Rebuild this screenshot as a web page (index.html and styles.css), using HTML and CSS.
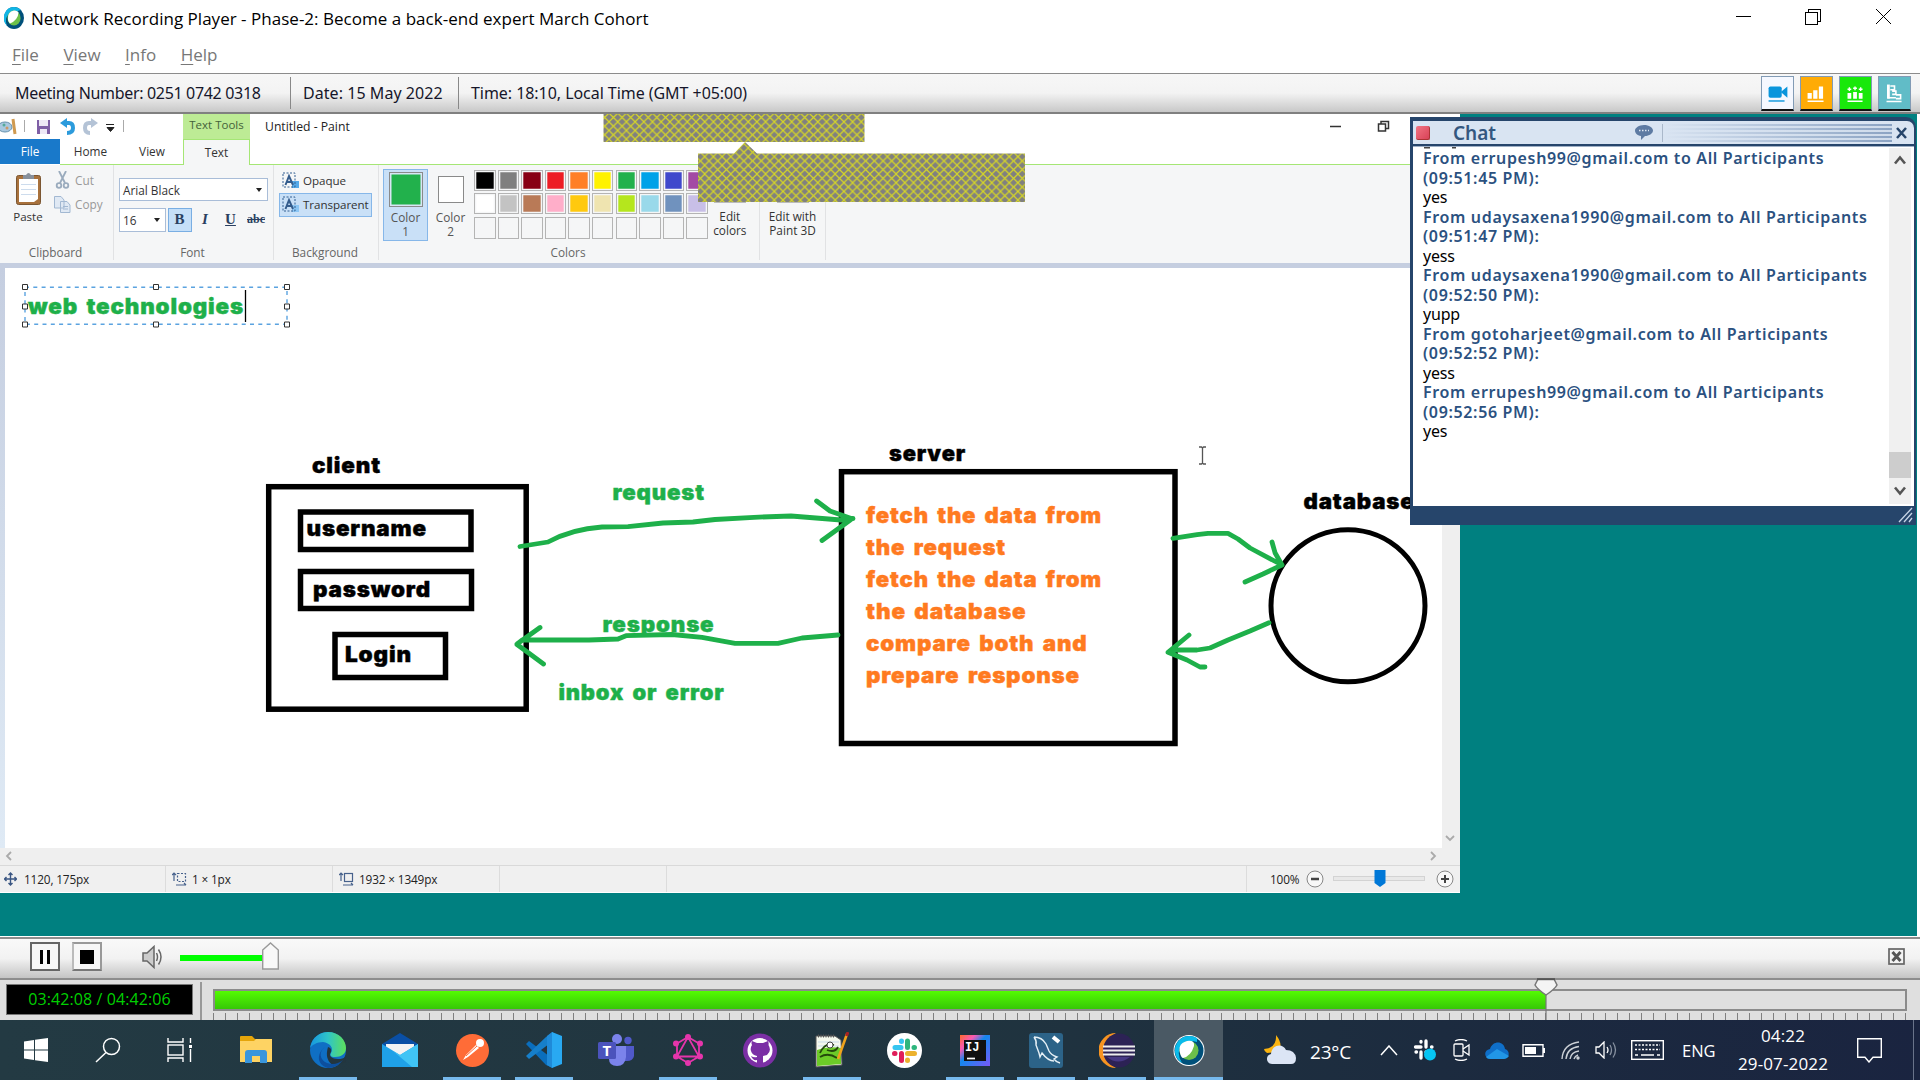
FILE: index.html
```html
<!DOCTYPE html>
<html lang="en">
<head>
<meta charset="utf-8">
<title>Network Recording Player</title>
<link rel="stylesheet" href="styles.css">
</head>
<body>
<header class="titlebar">
  <svg class="app-icon" width="20" height="22" viewBox="0 0 20 22"><ellipse cx="10" cy="11" rx="10" ry="11" fill="#00507a"/><path d="M10 0A10 11 0 0 0 3 19Q-1 8 10 5Q17 3 17 3A10 11 0 0 0 10 0Z" fill="#11b5e5"/><ellipse cx="10" cy="11" rx="6.6" ry="7.4" fill="#6cc04a"/><path d="M4 13Q3 5 10 3.6Q14 4 14.500 5.500Q14 13 6 16.500Q4.500 15 4 13Z" fill="#fff"/></svg>
  <span class="title">Network Recording Player - Phase-2: Become a back-end expert March Cohort</span>
  <svg class="win-controls" width="156" height="18" viewBox="0 0 156 18" fill="none" stroke="#000" shape-rendering="crispEdges"><path d="M0 8.500H15M69.500 4.500H81.500V16.500H69.500ZM72.500 4V1.500H84.500V13.500H82"/><path d="M140 1L155 16M155 1L140 16" shape-rendering="auto"/></svg>
</header>
<nav class="menu"><span><u>F</u>ile</span><span><u>V</u>iew</span><span><u>I</u>nfo</span><span><u>H</u>elp</span></nav>
<section class="infobar">
  <div class="info i1">Meeting Number: 0251 0742 0318</div>
  <div class="info i2">Date: 15 May 2022</div>
  <div class="info i3">Time: 18:10, Local Time (GMT +05:00)</div>
  <div class="info-buttons">
    <svg class="ib video" viewBox="0 0 33 32"><rect x="7" y="9" width="14" height="12" rx="2" fill="#0a95dc"/><path d="M20 15L27 9V21Z" fill="#0a95dc"/><path d="M7 24.500H24" stroke="#0a95dc" stroke-width="1.500"/></svg>
    <svg class="ib poll" viewBox="0 0 33 32" fill="#fff"><path d="M7 16h4.500v6H7zM13 13h4.500v9H13zM19 9h4.500v13H19zM7 24h17v1.500H7z"/></svg>
    <svg class="ib people" viewBox="0 0 33 32" fill="#fff"><path d="M8 16h4v6H8zM14 15h4v7h-4zM20 16h4v6h-4zM8 24h16v1.500H8z"/><path d="M10 10v4M8 12h4M16 9v4M14 11h4M22 10v4M20 12h4" stroke="#fff" stroke-width="1.500"/></svg>
    <svg class="ib notes" viewBox="0 0 33 32" fill="none" stroke="#fff" stroke-width="2"><path d="M10 7V22" stroke-width="3"/><path d="M12 8.500h4.500v4H12M14 14h4v3.500h-4M18 18h5v4h-5M9 21h9M8 25H24" stroke-width="1.700"/></svg>
  </div>
</section>

<main class="stage">
  <div class="paint">
    <div class="paint-title">
      <svg class="quick" width="100" height="25" viewBox="0 0 100 25"><ellipse cx="5" cy="13" rx="7" ry="5" fill="#a9c8df" stroke="#6591ad"/><circle cx="4" cy="11" r="1.500" fill="#5a9"/><circle cx="7" cy="14" r="1.500" fill="#c96"/><path d="M13 5L15 20" stroke="#cf9a50" stroke-width="3"/><path d="M24.500 6V18" stroke="#aaa"/><path d="M37 6H50V20H37Z" fill="#7f5fa6"/><path d="M39 6H48V12H39ZM40 15H47V20H40Z" fill="#eee8f6"/><path d="M63 9H69Q73 9 73 14T67 19" fill="none" stroke="#2c9bdc" stroke-width="4"/><path d="M60 9L67 4V14Z" fill="#2c9bdc"/><path d="M95 9H89Q85 9 85 14T90 19" fill="none" stroke="#b4c3d6" stroke-width="4"/><path d="M98 9L91 4V14Z" fill="#b4c3d6"/></svg>
      <svg width="25" height="25" viewBox="0 0 25 25"><path d="M6 10.500h8M7 13.500h7l-3.500 4z" stroke="#222" fill="#222"/><path d="M23.500 6V18" stroke="#aaa"/></svg>
      <div class="text-tools">Text Tools</div>
      <div class="doc-title">Untitled - Paint</div>
      <svg class="paint-controls" width="60" height="14" viewBox="0 0 60 14" fill="none" stroke="#333" stroke-width="1.500"><path d="M0 6.500H11M48.500 4H55.500V11H48.500ZM51 3.500V1.500H58.500V8.500H56"/></svg>
    </div>
    <div class="tabs"><div class="tab file">File</div><div class="tab home">Home</div><div class="tab view">View</div><div class="tab text">Text</div><div class="tab-rest"></div></div>
    <div class="ribbon">
      <div class="group clipboard">
        <div class="content">
          <div class="paste"><svg width="27" height="34" viewBox="0 0 27 34"><rect x="1.500" y="3.500" width="24" height="29" rx="2" fill="#a8713c" stroke="#7b5632"/><path d="M4 7H23V27L19 30H4Z" fill="#fff"/><path d="M6 12.500H21M6 17.500H21M6 22.500H21" stroke="#cddced"/><path d="M8 3H11Q13.500-1 16 3H19V7H8Z" fill="#87909c"/></svg><span>Paste</span></div>
          <div class="cutcopy">
            <div><svg width="17" height="18" viewBox="0 0 17 18" fill="none" stroke="#9aabbd" stroke-width="1.800"><path d="M5 0L11 12M12 0L6 12"/><circle cx="5" cy="14.500" r="2.300"/><circle cx="12" cy="14.500" r="2.300"/></svg>Cut</div>
            <div><svg width="17" height="17" viewBox="0 0 17 17" fill="#e0e9f4" stroke="#a2b8d2"><path d="M.5.500H7L10 4V12H.5ZM6.500 5.500H13L16 9V16.500H6.500Z"/><path d="M9 10.500H14M9 13H14"/></svg>Copy</div>
          </div>
        </div><div class="label">Clipboard</div>
      </div>
      <div class="group font">
        <div class="content">
          <div class="combo family"><span>Arial Black</span><i class="arrow"></i></div>
          <div class="font-row"><div class="combo size"><span>16</span><i class="arrow"></i></div><b class="fb on">B</b><i class="fb it">I</i><u class="fb">U</u><s class="fb abc">abc</s></div>
        </div><div class="label">Font</div>
      </div>
      <div class="group background">
        <div class="content">
          <div class="bg-opt"><svg width="18" height="17" viewBox="0 0 18 17"><path d="M10 9h7v7h-7z" fill="#55a9e8"/><rect x="1" y="1" width="12" height="14" fill="none" stroke="#335f91" stroke-dasharray="2 1.500"/><path d="M3.500 13L7 4L11 13M4.500 10H10" fill="none" stroke="#345c8c" stroke-width="2"/></svg>Opaque</div>
          <div class="bg-opt selected"><svg width="18" height="17" viewBox="0 0 18 17"><path d="M10 9h7v7h-7z" fill="#8cc6f4"/><rect x="1" y="1" width="12" height="14" fill="none" stroke="#335f91" stroke-dasharray="2 1.500"/><path d="M3.500 13L7 4L11 13M4.500 10H10" fill="none" stroke="#345c8c" stroke-width="2"/></svg>Transparent</div>
        </div><div class="label">Background</div>
      </div>
      <div class="group colors">
        <div class="content">
          <div class="color-btn active"><i class="sw big"></i><span>Color<br>1</span></div>
          <div class="color-btn"><i class="sw small"></i><span>Color<br>2</span></div>
          <div class="palette">
            <i class="black"></i><i class="gray"></i><i class="maroon"></i><i class="red"></i><i class="orange"></i><i class="yellow"></i><i class="green"></i><i class="sky"></i><i class="indigo"></i><i class="purple"></i>
            <i class="white"></i><i class="silver"></i><i class="brown"></i><i class="pink"></i><i class="gold"></i><i class="cream"></i><i class="lime"></i><i class="aqua"></i><i class="steel"></i><i class="lavender"></i>
            <i></i><i></i><i></i><i></i><i></i><i></i><i></i><i></i><i></i><i></i>
          </div>
          <div class="edit-btn ec"><i></i><span>Edit<br>colors</span></div>
        </div><div class="label">Colors</div>
      </div>
      <div class="group threed"><div class="content"><div class="edit-btn"><i></i><span>Edit with<br>Paint 3D</span></div></div></div>
    </div>
    <div class="canvas-area">
      <svg class="canvas" width="1437" height="580" viewBox="5 268 1437 580">
        <g fill="none" stroke="#000" stroke-width="5.500">
          <rect x="268.700" y="486.700" width="257.500" height="222.500"/><rect x="300.500" y="512" width="170.500" height="37.500"/><rect x="300.500" y="571.500" width="171" height="37"/><rect x="335" y="634.500" width="110.500" height="43"/>
          <rect x="841.500" y="471.700" width="333.500" height="271.800"/><ellipse cx="1348" cy="605.700" rx="77" ry="76" stroke-width="5"/>
        </g>
        <g class="ink">
          <text x="312" y="473" textLength="69" lengthAdjust="spacingAndGlyphs">client</text>
          <text x="306.500" y="535.500" textLength="120.500" lengthAdjust="spacingAndGlyphs">username</text>
          <text x="313" y="597" textLength="118" lengthAdjust="spacingAndGlyphs">password</text>
          <text x="345" y="662" textLength="67" lengthAdjust="spacingAndGlyphs">Login</text>
          <text x="889" y="461" textLength="77" lengthAdjust="spacingAndGlyphs">server</text>
          <text x="1303.500" y="509" textLength="111" lengthAdjust="spacingAndGlyphs">database</text>
        </g>
        <g class="ink g">
          <text x="28" y="314" textLength="216" lengthAdjust="spacingAndGlyphs">web technologies</text>
          <text x="612.500" y="500" textLength="92.500" lengthAdjust="spacingAndGlyphs">request</text>
          <text x="602.500" y="631.500" textLength="112" lengthAdjust="spacingAndGlyphs">response</text>
          <text x="558.500" y="700" textLength="166" lengthAdjust="spacingAndGlyphs">inbox or error</text>
        </g>
        <g class="ink o">
          <text x="866" y="522.500" textLength="236" lengthAdjust="spacingAndGlyphs">fetch the data from</text>
          <text x="866" y="554.500" textLength="140" lengthAdjust="spacingAndGlyphs">the request</text>
          <text x="866" y="586.500" textLength="236" lengthAdjust="spacingAndGlyphs">fetch the data from</text>
          <text x="866" y="618.500" textLength="160.500" lengthAdjust="spacingAndGlyphs">the database</text>
          <text x="866" y="650.500" textLength="221.500" lengthAdjust="spacingAndGlyphs">compare both and</text>
          <text x="866" y="682.500" textLength="214" lengthAdjust="spacingAndGlyphs">prepare response</text>
        </g>
        <g fill="none" stroke="#1eb04a" stroke-width="4.800" stroke-linecap="round" stroke-linejoin="round">
          <path d="M520 546.500L548 542Q572 529 602 527L628 526.700L663 523L693 522L715 519.500L754 517.300L791 516L841 520L853 518.500M816.600 501L830 511L852 518.700L822 540.500"/>
          <path d="M838 635L802 638L778 643.300H735L702 637.300L672 634.500L626 635.700L618 639L589 640H522L517 644L540 627.500M517 644.500L530 654L543.500 664"/>
          <path d="M1173 538.300L1197 534.700L1208 533.300H1228L1238 539L1250 548L1282 565M1272 542L1275 552.700L1282 565L1263 574L1245 582"/>
          <path d="M1269 622.700L1250 631L1228 640L1210 648L1197 650H1173L1168 652.300L1189 635M1168 652.300L1187 660L1200 667H1205"/>
        </g>
        <rect x="25" y="287.300" width="262" height="37" fill="none" stroke="#5ba3e0" stroke-width="1.400" stroke-dasharray="4 4.300"/>
        <path d="M22.500 284.500h5v5h-5zM153.500 284.500h5v5h-5zM284.500 284.500h5v5h-5zM22.500 304h5v5h-5zM284.500 304h5v5h-5zM22.500 322h5v5h-5zM153.500 322h5v5h-5zM284.500 322h5v5h-5z" fill="#fff" stroke="#333"/>
        <path d="M245.500 290V322" stroke="#000" stroke-width="1.300"/>
        <path d="M1199 447H1201.500L1202.500 448L1203.500 447H1206M1202.500 448V463M1199 464H1201.500L1202.500 463L1203.500 464H1206" fill="none" stroke="#555" stroke-width="1.300"/>
      </svg>
      <div class="vscroll"><svg width="17" height="16" viewBox="0 0 17 16"><path d="M4 4L8 8L12 4" fill="none" stroke="#aaa" stroke-width="1.800"/></svg></div>
    </div>
    <div class="hscroll"><svg width="18" height="16" viewBox="0 0 18 16"><path d="M11 4L7 8L11 12" fill="none" stroke="#aaa" stroke-width="1.800"/></svg><svg width="18" height="16" viewBox="0 0 18 16"><path d="M7 4L11 8L7 12" fill="none" stroke="#aaa" stroke-width="1.800"/></svg></div>
    <div class="status">
      <div class="cell c1"><svg width="13" height="14" viewBox="0 0 13 14" stroke="#3a5683" fill="none" stroke-width="1.400"><path d="M6.500 1V13M.5 7H12.500M4.500 3L6.500 1L8.500 3M4.500 11L6.500 13L8.500 11M2.500 5L.5 7L2.500 9M10.500 5L12.500 7L10.500 9"/></svg>1120, 175px</div>
      <div class="cell"><svg width="15" height="14" viewBox="0 0 15 14" stroke="#46618c" fill="none" stroke-width="1.200"><path d="M2 1V9M0 3L2 1L4 3M4 13H14M12 11L14 13"/><rect x="5.500" y="1.500" width="8" height="8" stroke-dasharray="2 1.500"/></svg>1 × 1px</div>
      <div class="cell"><svg width="15" height="14" viewBox="0 0 15 14" stroke="#46618c" fill="none" stroke-width="1.200"><path d="M2 1V9M0 3L2 1L4 3M4 13H14M12 11L14 13"/><rect x="5.500" y="1.500" width="8" height="8"/></svg>1932 × 1349px</div>
      <div class="cell"></div><div class="cell wide"></div>
      <div class="zoom"><span>100%</span><svg width="152" height="24" viewBox="0 0 152 24"><circle cx="10" cy="12" r="8" fill="#f8f8f8" stroke="#888"/><path d="M6 12H14" stroke="#444" stroke-width="2.500"/><rect x="28.500" y="9.500" width="91" height="4" fill="#e8e8e8" stroke="#d3d3d3"/><path d="M69.500 3H80.500V16L75 20L69.500 16Z" fill="#0078d7"/><circle cx="140" cy="12" r="8" fill="#f8f8f8" stroke="#888"/><path d="M136 12H144M140 8V16" stroke="#444" stroke-width="2"/></svg></div>
    </div>
  </div>

  <svg class="hatch" width="424" height="90" viewBox="603 114 424 90"><defs><pattern id="x" width="8.700" height="8.700" patternUnits="userSpaceOnUse"><rect width="9" height="9" fill="#808080"/><path d="M-1-1L9.700 9.700M9.700-1L-1 9.700" stroke="#d6d626" stroke-width="1.200"/></pattern></defs><path d="M603.500 114H864.500V142H603.500ZM698 153.500H734L745 142L757 153.500H1025V202H698Z" fill="url(#x)"/></svg>

  <aside class="chat">
    <div class="chat-head"><i class="red-dot"></i><span class="chat-name">Chat</span><svg class="bubble" width="20" height="17" viewBox="0 0 20 17"><path d="M10 1C15 1 19 3.500 19 6.500S15 12 11 12L7 16V12C3 11.500 1 9 1 6.500S5 1 10 1Z" fill="#5e7ba3"/><path d="M5 6.500H15" stroke="#dfe8f4" stroke-width="1.600" stroke-dasharray="1.500 1.500"/></svg><i class="grip"></i><svg width="13" height="12" viewBox="0 0 13 12"><path d="M2 1L11 11M11 1L2 11" stroke="#26456b" stroke-width="2.500"/></svg></div>
    <div class="chat-body">
      <div class="log">
        <p class="from">From errupesh99@gmail.com to All Participants<br>(09:51:45 PM):</p><p>yes</p>
        <p class="from">From udaysaxena1990@gmail.com to All Participants<br>(09:51:47 PM):</p><p>yess</p>
        <p class="from">From udaysaxena1990@gmail.com to All Participants<br>(09:52:50 PM):</p><p>yupp</p>
        <p class="from">From gotoharjeet@gmail.com to All Participants<br>(09:52:52 PM):</p><p>yess</p>
        <p class="from">From errupesh99@gmail.com to All Participants<br>(09:52:56 PM):</p><p>yes</p>
      </div>
      <div class="chat-scroll"><svg width="22" height="28" viewBox="0 0 22 28"><path d="M6 15.500L11 9.500L16 15.500" fill="none" stroke="#555" stroke-width="2.600"/></svg><i></i><svg width="22" height="26" viewBox="0 0 22 26"><path d="M6 9.500L11 15.500L16 9.500" fill="none" stroke="#555" stroke-width="2.600"/></svg></div>
    </div>
    <div class="chat-foot"><svg width="16" height="16" viewBox="0 0 16 16"><path d="M1 15L14 1M6 15L14 6M11 15L14 11" stroke="#c6d4e6" stroke-width="1.300"/></svg></div>
  </aside>
</main>

<section class="player">
  <div class="pbtn"><i class="pause"></i></div><div class="pbtn light"><i class="stop"></i></div>
  <svg class="speaker" width="22" height="24" viewBox="0 0 22 24" fill="none" stroke="#666" stroke-width="1.500"><path d="M1 8H5L12 1.500V22.500L5 16H1Z" fill="#ccc"/><path d="M14.500 8Q16.500 12 14.500 16M16.500 4.500Q21.500 12 16.500 19.500"/></svg>
  <i class="volume"></i><svg class="thumb" width="17" height="28" viewBox="0 0 17 28"><path d="M.700 8L8.500 1L16.300 8V27H.700Z" fill="#f8f8f8" stroke="#999" stroke-width="1.400"/></svg>
  <svg class="pclose" width="17" height="17" viewBox="0 0 17 17"><rect x="1" y="1" width="15" height="15" fill="#f3f3f3" stroke="#666" stroke-width="1.700"/><path d="M4.500 4L12.500 13M12.500 4L4.500 13" stroke="#555" stroke-width="3"/></svg>
</section>
<section class="timeline">
  <div class="clock">03:42:08 / 04:42:06</div><i class="tsep"></i>
  <div class="scrub"><div class="track"><i></i></div><div class="ticks"></div>
    <svg class="marker" width="24" height="42" viewBox="0 0 24 42"><path d="M4 1H20L23 7Q21 11 12 17Q3 11 1 7Z" fill="#f4f4f4" stroke="#777" stroke-width="1.500"/><path d="M3 1.200H21" stroke="#555" stroke-width="2"/><path d="M12 17V42" stroke="#777" stroke-width="1.200"/></svg></div>
</section>

<footer class="taskbar">
  <div class="task"><svg width="24" height="24" viewBox="0 0 24 24" fill="#fff"><path d="M0 3.500L10 2V11.500H0ZM11 1.800L24 0V11.500H11ZM0 12.500H10V22L0 20.500ZM11 12.500H24V24L11 22.200Z"/></svg></div>
  <div class="task"><svg width="26" height="26" viewBox="0 0 26 26" fill="none" stroke="#fff" stroke-width="1.500"><circle cx="16.500" cy="9.500" r="8"/><path d="M11 15.500L1 25"/></svg></div>
  <div class="task tv"><svg width="25" height="24" viewBox="0 0 25 24" fill="none" stroke="#fff" stroke-width="1.400"><path d="M1 0V4H16V0M1 24V20H16V24M23.500 0V5M23.500 11V24"/><rect x="1" y="7" width="15" height="10"/><path d="M22 7h3v3h-3z" fill="#fff" stroke="none"/></svg></div>
  <div class="task"><svg width="32" height="28" viewBox="0 0 32 28"><path d="M0 1Q0 0 1 0H12L15 3H31V10H0Z" fill="#e5a50a"/><path d="M0 5H14L16 3H32V26H0Z" fill="#fed363"/><path d="M5 27V17Q5 14 8 14H24Q27 14 27 17V27H20V20H12V27Z" fill="#3a96dd"/></svg></div>
  <div class="task run"><svg width="36" height="36" viewBox="0 0 36 36"><defs><linearGradient id="e1" x1="0" x2="1"><stop stop-color="#1696e0"/><stop offset=".5" stop-color="#2fc4c8"/><stop offset="1" stop-color="#5ee05a"/></linearGradient></defs><circle cx="18" cy="18" r="18" fill="#0f6fc4"/><path d="M0 16C2 5 10 0 18 0C29 0 36 8 36 16C36 22 31 25 25 25C20 25 20 23 21 21C24 16 20 11 13 10C7 10 2 13 0 16Z" fill="url(#e1)"/><path d="M18 15Q22 16 21 20C18 24 22 27 28 27Q33 27 35 25L36 30L24 34Q14 28 18 15Z" fill="#23363f"/><path d="M15 15C8 20 10 28 17 31C23 33 28 32 33 28Q27 36 18 36C7 33 6 22 15 15Z" fill="#0d4f9e"/></svg></div>
  <div class="task"><svg width="36" height="34" viewBox="0 0 36 34"><path d="M0 11L18 0L36 11V18H0Z" fill="#0a4fa5"/><path d="M4 11H32V22H4Z" fill="#f3f3f3"/><path d="M0 11L18 22L36 11V34H0Z" fill="#1fa1e8"/><path d="M36 11V34H30L11 18L18 22Z" fill="#40c4f5"/></svg></div>
  <div class="task run"><svg width="33" height="33" viewBox="0 0 33 33"><circle cx="16.500" cy="16.500" r="16.500" fill="#ff6c37"/><circle cx="24" cy="9" r="4" fill="#fff"/><path d="M20 11L23 14L12 23L7 26L10 21Z" fill="#fff"/><path d="M21 12L10 22" stroke="#ff6c37"/></svg></div>
  <div class="task run"><svg width="36" height="36" viewBox="0 0 36 36"><path d="M0 12L3 9L27 27V36L20 33Z" fill="#0a6ebd"/><path d="M0 24L3 27L27 9V0L20 5Z" fill="#167fca"/><path d="M26 0L36 4V32L26 36Z" fill="#29a9f2"/><path d="M26 0V36L21 33V4Z" fill="#1f8ad8"/></svg></div>
  <div class="task"><svg width="36" height="32" viewBox="0 0 36 32"><circle cx="19" cy="5" r="5" fill="#7b83eb"/><circle cx="30" cy="6.500" r="3.700" fill="#5059c9"/><path d="M25 12H36V22Q35 27 29 27H25Z" fill="#5059c9"/><path d="M12 12H28V23Q27 32 19 32T11 25Z" fill="#7b83eb"/><rect y="8" width="18" height="17" rx="1.500" fill="#4b53bc"/><text x="4.500" y="22" fill="#fff" font-family="Open Sans" font-weight="700" font-size="15">T</text></svg></div>
  <div class="task run"><svg width="30" height="32" viewBox="0 0 30 32" fill="none" stroke="#e535ab" stroke-width="1.800"><path d="M15 3L26 9.500V22.500L15 29L4 22.500V9.500ZM15 3L4 22.500H26Z"/><g fill="#e535ab" stroke="none"><circle cx="15" cy="3" r="3"/><circle cx="27" cy="9.500" r="3"/><circle cx="27" cy="22.500" r="3"/><circle cx="15" cy="29" r="3"/><circle cx="3" cy="22.500" r="3"/><circle cx="3" cy="9.500" r="3"/></g></svg></div>
  <div class="task"><svg width="34" height="35" viewBox="0 0 34 35"><circle cx="17" cy="17.500" r="17" fill="#7b2fa5"/><circle cx="17" cy="17.500" r="12.500" fill="#fff"/><path d="M9 8L14 10H20L25 8Q26 10 25.500 12Q29 18 24 22L20 23V31H14V27Q10 28 8 23Q11 25 14 24V23Q9 22 8 18Q7 15 9 12Q8 10 9 8Z" fill="#7b2fa5"/></svg></div>
  <div class="task npp run"><svg width="34" height="36" viewBox="0 0 34 36"><path d="M1 4H20L26 8L27 33L1 35Z" fill="#f4f8ed" stroke="#555"/><path d="M2 18Q12 14 26 16V32L2 34Z" fill="#6ccb28"/><path d="M3 10H24M3 14H24" stroke="#c9dbe8"/><path d="M5 21Q10 10 19 13M5 25Q13 20 22 26M12 18Q20 21 23 15" fill="none" stroke="#24480c" stroke-width="1.800"/><circle cx="15" cy="13" r="3" fill="#fff" stroke="#444"/><path d="M32 2L23 27" stroke="#efa31c" stroke-width="2.600"/><path d="M33 0L31.500 4" stroke="#a22" stroke-width="3"/><path d="M3 4H19" stroke="#555" stroke-width="3" stroke-dasharray="1 1.500"/></svg></div>
  <div class="task"><svg width="35" height="35" viewBox="0 0 35 35"><circle cx="17.500" cy="17.500" r="17.500" fill="#fff"/><g stroke-width="5" stroke-linecap="round"><path d="M8 14.500H14M14.500 8V8.500" stroke="#36c5f0"/><path d="M20.500 8V14.500M27 14.500H27.500" stroke="#2eb67d"/><path d="M20.500 20.500H27.500M20.500 27V27.500" stroke="#ecb22e"/><path d="M14.500 20.500V27.500M7.500 20.500H8" stroke="#e01e5a"/></g></svg></div>
  <div class="task t71 first run"><svg width="30" height="31" viewBox="0 0 30 31"><defs><linearGradient id="ij" x2="1" y2="1"><stop stop-color="#ff6a2b"/><stop offset=".25" stop-color="#f95ab4"/><stop offset=".45" stop-color="#1288ee"/><stop offset="1" stop-color="#7a58f6"/></linearGradient></defs><rect width="30" height="31" fill="url(#ij)"/><rect x="4" y="5" width="22" height="21" fill="#111"/><text x="5" y="16" fill="#fff" font-family="Liberation Mono" font-size="12" font-weight="700">IJ</text><path d="M7 23.500H15" stroke="#fff" stroke-width="1.700"/></svg></div>
  <div class="task t71 run"><svg width="34" height="35" viewBox="0 0 34 35"><rect width="34" height="35" rx="3" fill="#2c6388"/><path d="M5 4Q13 4 17 11L20 18Q22 22 28 24L25 26Q27 29 31 30M5 4Q8 8 7 12L10 20L11 24L13 20Q19 28 25 28" fill="none" stroke="#e6f0f6" stroke-width="1.400"/><path d="M24 4L30 9" stroke="#fff" stroke-width="4"/></svg></div>
  <div class="task t71 run"><svg width="36" height="35" viewBox="0 0 36 35"><path d="M17 0A17.500 17.500 0 0 0 17 35Q4 28 5 17T17 0Z" fill="#f79421"/><ellipse cx="20" cy="17.500" rx="16" ry="17" fill="#2c2255"/><path d="M4 13.500H36M4 17.500H36M4 21.500H36" stroke="#eee" stroke-width="2"/><path d="M8 24Q19 33 31 24Z" fill="#473985"/></svg></div>
  <div class="task webex"><svg width="32" height="33" viewBox="0 0 32 33"><circle cx="16" cy="16.500" r="15.500" fill="#fff"/><circle cx="16" cy="16.500" r="14.500" fill="#00507a"/><path d="M24 4A14.500 14.500 0 1 0 9 29Q3 19 8 12T24 8Z" fill="#0bbbea"/><circle cx="16" cy="16.500" r="9.500" fill="#6cc04a"/><path d="M8 22Q3 10 14 7Q22 6 21 12Q18 22 10 24Q9 24 8 22Z" fill="#fff"/></svg></div>
  <div class="tray">
    <svg class="weather" width="33" height="30" viewBox="0 0 33 30"><path d="M12 0Q20 10 14 17L3 18Q0 16 0 14Q13 13 12 0Z" fill="#fbb40f"/><path d="M8 29C2 29 1 20 7 19C8 9 19 8 22 15Q31 15 32 23Q32 29 27 29Z" fill="#dce5f5"/></svg>
    <span class="temp">23°C</span>
    <svg class="chev" width="18" height="11" viewBox="0 0 18 11"><path d="M1 10L9 1L17 10" fill="none" stroke="#fff" stroke-width="1.500"/></svg>
    <svg class="tslack" width="23" height="22" viewBox="0 0 23 22"><g stroke="#fff" stroke-width="3.300" stroke-linecap="round"><path d="M2.500 8H8M8 2.500V3M13 2V8M18.500 8H19M3 13H3.500M8 13V19M13 13H18"/></g><circle cx="17" cy="15.500" r="6" fill="#06c5f3"/></svg>
    <svg class="cam" width="17" height="22" viewBox="0 0 17 22" fill="none" stroke="#fff" stroke-width="1.300"><rect x="1" y="5" width="9" height="12" rx="1"/><path d="M10 10L16 6V16L10 12M2 2Q8-1 14 2M2 20Q8 23 14 20"/></svg>
    <svg class="cloud" width="24" height="17" viewBox="0 0 24 17"><path d="M6 17C-1 17-2 8 5 7C8-2 19-1 20 7C26 9 24 17 19 17Z" fill="#0f6fc9"/><path d="M1 15L12 7L24 14Q22 17 19 17H5Q2 17 1 15Z" fill="#2196e6"/></svg>
    <svg class="batt" width="23" height="13" viewBox="0 0 23 13"><path d="M1 .800H21V12.200H1Z" fill="none" stroke="#fff" stroke-width="1.400"/><path d="M3 3H14V10H3ZM21 4H23V9H21Z" fill="#fff"/></svg>
    <svg class="wifi" width="20" height="19" viewBox="0 0 20 19" fill="none" stroke="#ccd1d7" stroke-width="1.400"><path d="M1 18Q2 3 18 1M5 18Q6 7 18 5.500M9 18Q10 11 18 10"/><path d="M13 18Q14 15 17 14"/><circle cx="17" cy="17" r="1" fill="#fff"/></svg>
    <svg class="snd" width="22" height="18" viewBox="0 0 22 18" fill="none" stroke="#fff" stroke-width="1.300"><path d="M1 6H4L9 1V17L4 12H1ZM12 6Q14 9 12 12"/><path d="M15 4Q18 9 15 14M18 1.500Q23 9 18 16.500" stroke="#8791a0"/></svg>
    <svg class="kbd" width="33" height="20" viewBox="0 0 33 20" fill="none" stroke="#fff" stroke-width="1.400"><rect x=".7" y=".7" width="31.600" height="18.600"/><path d="M4 5H29M4 9.500H29" stroke-dasharray="2 1.500"/><path d="M4 15H7M10 15H23M26 15H29"/></svg>
    <span class="lang">ENG</span>
    <div class="datetime"><span>04:22</span><span>29-07-2022</span></div>
    <svg class="notif" width="25" height="25" viewBox="0 0 25 25"><path d="M.700.700H24.300V19.300H16L12 24L8 19.300H.700Z" fill="none" stroke="#fff" stroke-width="1.400"/></svg>
    <i class="edge"></i>
  </div>
</footer>
</body>
</html>
```
FILE: styles.css
```css
* { box-sizing: border-box; }
body { margin: 0; width: 1920px; height: 1080px; overflow: hidden; display: flex; flex-direction: column; background: #fff; font-family: "Open Sans", "Noto Sans", sans-serif; color: #000; }
svg { display: block; flex: none; }
i { font-style: normal; }

.titlebar { height: 37px; display: flex; align-items: center; flex: none; padding: 0 28px 0 4px; }
.app-icon { margin-top: -2px; }
.title { margin-left: 7px; font-size: 17px; letter-spacing: 0.02px; white-space: nowrap; flex: 1; }
.win-controls { margin-top: -4px; margin-right: 0; }
.menu { height: 36px; flex: none; display: flex; align-items: center; padding: 0 0 1px 12px; gap: 24.500px; font-size: 17px; color: #777; }
.menu u { text-underline-offset: 3px; text-decoration-thickness: 1px; }

.infobar { height: 41px; flex: none; display: flex; align-items: center; border-top: 1.500px solid #8c8c8c; border-bottom: 2px solid #808080; background: linear-gradient(#f7f7f7, #f3f3f3 50%, #c8c8c8); font-family: "Noto Sans", sans-serif; font-size: 16px; color: #16162a; }
.info { height: 32px; line-height: 32px; white-space: nowrap; }
.i1 { width: 291px; padding-left: 15px; border-right: 1.500px solid #888; letter-spacing: -0.33px; }
.i2 { width: 168px; padding-left: 12px; border-right: 1.500px solid #888; letter-spacing: 0.05px; }
.i3 { padding-left: 12px; letter-spacing: -0.05px; }
.info-buttons { margin-left: auto; margin-right: 9px; display: flex; gap: 6px; }
.ib { width: 33px; height: 35px; border: 1.500px solid #829bb5; border-bottom: 2px solid #111; }
.video { background: #f5f8ff; }
.poll { background: #ffab06; }
.people { background: #19e80b; }
.notes { background: #61bcc7; }

.stage { position: relative; height: 822px; flex: none; background: #008080; border-right: 3px solid #fff; }
.paint { width: 1459.500px; height: 779px; display: flex; flex-direction: column; background: #fff; font-size: 11.800px; color: #333; }
.paint-title { height: 25px; display: flex; flex: none; }
.text-tools { margin-left: 58px; width: 67px; background: #bdeb95; text-align: center; line-height: 22px; font-size: 11.500px; white-space: nowrap; color: #44623a; }
.doc-title { margin-left: 15px; line-height: 26px; font-size: 12.200px; color: #222; flex: 1; }
.paint-controls { margin: 6px 70px 0 0; }
.tabs { height: 26px; flex: none; display: flex; text-align: center; line-height: 25px; }
.tab, .tab-rest { border-bottom: 1.500px solid #a5e675; }
.file { width: 60px; background: #1979ca; color: #fff; border: 0; height: 25px; }
.home { width: 61px; }
.view { width: 62px; }
.text { width: 67px; border: 1.500px solid #a5e675; border-bottom: 0; background: #f5f6f7; }
.tab-rest { flex: 1; }
.ribbon { height: 98px; flex: none; display: flex; background: #f5f6f7; }
.group { display: flex; flex-direction: column; border-right: 1px solid #e1e2e4; height: 95px; }
.group .content { flex: 1; display: flex; }
.group .label { height: 16px; line-height: 16px; text-align: center; color: #666; padding-right: 2px; }
.clipboard { width: 114px; }
.paste { width: 54px; padding: 7px 0 0 2px; display: flex; flex-direction: column; align-items: center; gap: 3px; line-height: 16px; font-size: 11.500px; }
.cutcopy { color: #999; display: flex; flex-direction: column; gap: 7px; padding-top: 6px; }
.cutcopy div { display: flex; gap: 4px; align-items: center; line-height: 17px; }
.font { width: 160px; }
.font .content { flex-direction: column; padding: 13px 0 0 5px; gap: 7px; }
.combo { height: 23px; border: 1px solid #a9bdd8; background: #fff; display: flex; align-items: center; justify-content: space-between; padding: 0 5px 0 3px; }
.arrow { border: 3.500px solid transparent; border-top: 4px solid #222; border-bottom: 0; }
.family { width: 149px; }
.size { width: 47px; height: 24px; }
.font-row { display: flex; gap: 1.500px; }
.fb { width: 24px; height: 24px; text-align: center; line-height: 21px; font-family: "Liberation Serif", serif; font-weight: 700; font-size: 15px; color: #2a3f60; border: 1px solid transparent; }
.on { background: #c5dff8; border-color: #79aee3; }
.it { font-style: italic; }
.abc { font-size: 12px; }
.background { width: 105px; }
.background .content { flex-direction: column; padding: 3.500px 0 0 5px; }
.bg-opt { width: 93px; height: 24px; border: 1px solid transparent; display: flex; gap: 3px; align-items: center; padding-left: 2px; font-size: 11.600px; letter-spacing: -0.05px; }
.selected { background: #c9e0f7; border-color: #86b7e9; }
.colors { width: 381px; }
.colors .content { padding: 3.500px 0 0 4px; }
.color-btn { width: 45px; height: 72px; display: flex; flex-direction: column; align-items: center; line-height: 14px; text-align: center; border: 1px solid transparent; color: #555; }
.active { background: #c9e0f7; border-color: #86b7e9; }
.sw { border: 1.500px solid #8a8a8a; }
.big { width: 34px; height: 35px; margin: 2px 0 3px; background: #22b14c; box-shadow: inset 0 0 0 1.500px #d8e6f4; }
.small { width: 26px; height: 27px; margin: 6px 0 7px; background: #fff; }
.palette { display: grid; grid-template-columns: repeat(10, 21.500px); grid-template-rows: 21px 21px 22px; gap: 2.500px 2.100px; margin: 1px 0 0 1px; height: 70px; }
.palette i { border: 1.300px solid #b4b4b4; box-shadow: inset 0 0 0 1.300px #f5f6f7; }
.black { background: #000; } .gray { background: #7f7f7f; } .maroon { background: #880015; } .red { background: #ed1c24; } .orange { background: #ff7f27; } .yellow { background: #fff200; } .green { background: #22b14c; } .sky { background: #00a2e8; } .indigo { background: #3f48cc; } .purple { background: #a349a4; }
.white { background: #fff; } .silver { background: #c3c3c3; } .brown { background: #b97a57; } .pink { background: #ffaec9; } .gold { background: #ffc90e; } .cream { background: #efe4b0; } .lime { background: #b5e61d; } .aqua { background: #99d9ea; } .steel { background: #7092be; } .lavender { background: #c8bfe7; }
.edit-btn { width: 65px; display: flex; flex-direction: column; align-items: center; text-align: center; line-height: 14px; }
.edit-btn i { width: 32px; height: 34px; margin-bottom: 6px; border-bottom: 2px solid #bbb; }
.ec { width: 44px; }
.threed { width: 66px; }
.threed .content { padding-top: 4px; }

.canvas-area { height: 585px; flex: none; display: flex; border-top: 5px solid #c5cee0; background: linear-gradient(#c5cee0, #dfeaf5); padding-left: 5px; }
.canvas { background: #fff; }
.vscroll { flex: 1; background: #efefef; display: flex; align-items: flex-end; }
.ink { font-family: Inter, "Liberation Sans", sans-serif; font-weight: 900; font-size: 21.500px; fill: #000; stroke: #000; stroke-width: 0.4px; word-spacing: 3px; letter-spacing: 0.8px; }
.g { fill: #1eb04a; stroke: #1eb04a; }
.o { fill: #ff7a20; stroke: #ff7a20; }
.hscroll { height: 18px; flex: none; background: #efefef; border-bottom: 1px solid #d9d9d9; display: flex; justify-content: space-between; padding-right: 18px; }
.status { height: 27px; flex: none; display: flex; background: #f0f0f0; font-size: 11.800px; letter-spacing: -0.15px; color: #222; border-bottom: 1px solid #fff; }
.cell { width: 167px; display: flex; align-items: center; gap: 5px; padding-left: 6px; border-right: 1px solid #dcdcdc; }
.c1 { padding-left: 4px; gap: 7px; width: 166px; }
.wide { width: 580px; }
.zoom { display: flex; align-items: center; padding-left: 23px; gap: 6px; }

.hatch { position: absolute; left: 603px; top: 0; }

.chat { position: absolute; left: 1410px; top: 3px; width: 506px; height: 408px; background: #26456b; padding: 4px 2px 0 3px; border-top-right-radius: 10px; display: flex; flex-direction: column; }
.chat-head { height: 23px; background: #d9e4f2; display: flex; align-items: center; border-top-right-radius: 7px; padding-right: 6px; flex: none; }
.red-dot { width: 14px; height: 14px; margin-left: 3px; border-radius: 2px; background: linear-gradient(135deg, #f27583, #d84257); border-right: 1px solid #a33; border-bottom: 1px solid #a33; }
.chat-name { margin-left: 23px; width: 181px; font: 600 19px/22px "Noto Sans", sans-serif; color: #34577f; }
.grip { margin: 0 3px 0 8px; height: 18px; flex: 1; border-left: 1px solid #aab8ca; background: linear-gradient(90deg, #d9e4f2, rgba(217, 228, 242, 0)), repeating-linear-gradient(#8ba3c3 0 2px, #d0dceb 2px 4px); }
.chat-body { height: 360px; flex: none; margin: 1.500px 0 0; background: #fff; border-top: 1px solid #9fb0c6; display: flex; }
.log { flex: 1; padding: 2.500px 0 0 10px; font-family: "Noto Sans", sans-serif; font-size: 16px; line-height: 19.500px; white-space: nowrap; background: linear-gradient(#444, #444) 11px 0 / 6px 1.500px no-repeat, linear-gradient(#444, #444) 39px 0 / 4px 1.500px no-repeat; }
.log p { margin: 0; letter-spacing: -0.2px; }
.log .from { font-weight: 600; color: #2b5180; letter-spacing: 0.65px; }
.chat-scroll { width: 22px; margin: 1px 3px 2px 0; background: #f0f0f0; display: flex; flex-direction: column; }
.chat-scroll i { height: 26px; background: #cdcdcd; margin-top: auto; }
.chat-foot { flex: 1; display: flex; justify-content: flex-end; align-items: center; }

.player { height: 43px; flex: none; margin-top: 1px; border-top: 2px solid #8d8d8d; border-bottom: 2px solid #8d8d8d; background: linear-gradient(#f9f9f9, #f2f2f2 50%, #c4c4c4); display: flex; align-items: center; padding: 0 15px 4px 30px; }
.pbtn { width: 30px; height: 29px; border: 2px solid #666; background: #f7f7f7; margin-right: 11.500px; display: flex; align-items: center; justify-content: center; }
.light { border-color: #999 #999 #777 #bbb; }
.pause { width: 10px; height: 14px; border: solid #000; border-width: 0 3.500px; }
.stop { width: 14px; height: 14px; background: #000; }
.speaker { margin-left: 29px; }
.volume { width: 83px; height: 6px; background: #0f0; margin-left: 16px; margin-top: 2px; }
.thumb { margin-left: -1px; margin-top: -2px; }
.pclose { margin-left: auto; }
.timeline { height: 40px; flex: none; background: #dfdfdf; display: flex; padding-left: 6px; }
.clock { margin-top: 4px; width: 187px; height: 31px; background: #000; color: #00d000; text-align: center; line-height: 28px; font-size: 16px; letter-spacing: 0.1px; border: 1px solid #777; }
.tsep { width: 2px; margin: 2px 11px 0 7px; background: #999; }
.scrub { width: 1694px; padding-top: 9px; position: relative; }
.track { height: 22px; border: 2px solid #8b8b8b; background: #dfdfdf; }
.track i { display: block; width: 1331px; height: 18px; background: linear-gradient(#54fb02, #36c806); }
.ticks { margin-top: 2px; height: 7px; background: repeating-linear-gradient(90deg, #808080 0 1.500px, transparent 1.500px 12px); }
.marker { position: absolute; left: 1321px; top: -2px; }

.taskbar { height: 60px; flex: none; background: linear-gradient(90deg, #233a43, #20343f 50%, #1c2b3f 75%, #1a2440); display: flex; color: #fff; }
.task { width: 72px; height: 60px; display: flex; align-items: center; justify-content: center; position: relative; flex: none; }
.t71 { width: 71px; }
.first { margin-left: -1px; }
.tv { width: 76px; padding-right: 6px; }
.npp { padding-right: 1px; }
.run::after, .webex::after { content: ""; position: absolute; bottom: 0; width: 58px; height: 3px; background: #76b9ed; }
.webex { width: 69px; background: #4a5964; margin-left: 2px; }
.webex::after { width: 69px; }
.tray { display: flex; align-items: center; flex: 1; position: relative; margin-left: 41px; }
.temp { font-size: 19px; margin-left: 13px; width: 45px; white-space: nowrap; letter-spacing: -0.2px; padding-top: 3px; }
.chev { margin-left: 25px; }
.tslack { margin-left: 15px; }
.cam { margin-left: 17px; }
.cloud { margin-left: 15px; }
.batt { margin-left: 13px; }
.wifi { margin-left: 16px; }
.snd { margin-left: 14px; }
.kbd { margin-left: 14px; }
.lang { font-size: 16.500px; margin-left: 18px; width: 36px; }
.datetime { width: 100px; margin-left: 15px; display: flex; flex-direction: column; align-items: center; line-height: 28px; font-size: 17px; letter-spacing: 0.15px; white-space: nowrap; }
.notif { margin-left: 24px; margin-top: 0; }
.edge { margin-left: auto; margin-right: 6px; width: 1px; height: 60px; background: #69738a; }
```
